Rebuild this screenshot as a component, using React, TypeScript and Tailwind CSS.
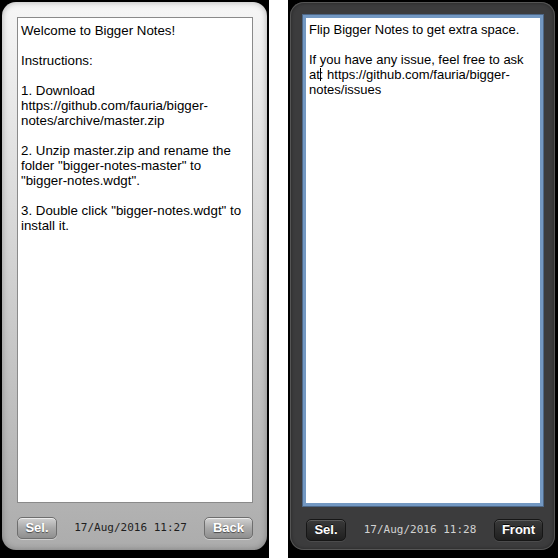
import React from 'react';

const sans = 'font-["Liberation_Sans",Arial,sans-serif]';
const mono = 'font-["DejaVu_Sans_Mono",monospace]';

function LightButton({ label, width }: { label: string; width: string }) {
    return (
        <div
            className={`${width} h-[22px] flex items-center justify-center rounded-[5px] border border-[#6e6e6e] bg-gradient-to-b from-[#d2d2d2] via-[#a9a9a9] to-[#8f8f8f] shadow-[inset_0_1px_0_rgba(255,255,255,0.6),0_1px_0_rgba(255,255,255,0.4)] text-[13px] font-bold text-white [text-shadow:0_1px_1px_rgba(0,0,0,0.55)] ${sans}`}
        >
            {label}
        </div>
    );
}

function DarkButton({ label, width }: { label: string; width: string }) {
    return (
        <div
            className={`${width} h-[22px] flex items-center justify-center rounded-[5px] border border-[#161616] bg-gradient-to-b from-[#3a3a3a] to-[#202020] shadow-[inset_0_1px_0_rgba(255,255,255,0.18),0_1px_0_rgba(255,255,255,0.08)] text-[13px] font-bold text-white [text-shadow:0_-1px_0_rgba(0,0,0,0.8)] ${sans}`}
        >
            {label}
        </div>
    );
}

export default function App() {
    return (
        <div className="flex h-[558px] w-[558px] justify-between bg-white">
            {/* Front side */}
            <div className="w-[269px] bg-black pl-[2px] pr-[2px] pt-[2px] pb-[8px]">
                <div className="flex h-full flex-col rounded-[14px] bg-gradient-to-b from-[#f6f6f6] to-[#acacac] pl-[15px] pr-[14px] pt-[15px] shadow-[inset_0_0_6px_rgba(0,0,0,0.3)]">
                    <div
                        className={`h-[486px] border border-[#8a8a8a] bg-white pl-[3px] pt-[5px] text-[13.3px] leading-[15px] text-black whitespace-pre ${sans}`}
                    >
                        {`Welcome to Bigger Notes!

Instructions:

1. Download
https://github.com/fauria/bigger-
notes/archive/master.zip

2. Unzip master.zip and rename the
folder "bigger-notes-master" to
"bigger-notes.wdgt".

3. Double click "bigger-notes.wdgt" to
install it.`}
                    </div>
                    <div className="mt-[14px] flex items-center justify-between">
                        <LightButton label="Sel." width="w-[40px]" />
                        <span className={`text-[11px] text-[#1e1e1e] ${mono}`}>17/Aug/2016 11:27</span>
                        <LightButton label="Back" width="w-[49px]" />
                    </div>
                </div>
            </div>

            {/* Back side */}
            <div className="w-[270px] bg-black pl-[2px] pr-[3px] pt-[2px] pb-[8px]">
                <div className="flex h-full flex-col rounded-[14px] bg-[#3c3c3d] pl-[13px] pr-[12px] pt-[13px] shadow-[inset_0_0_0_1px_#555,inset_0_0_4px_rgba(0,0,0,0.6)]">
                    <div
                        className={`h-[491px] border-[3px] border-[#7398c2] bg-white pl-[3px] pt-[4px] text-[13px] leading-[15px] text-black whitespace-pre shadow-[0_0_0_1px_#4d6787] ${sans}`}
                    >
                        {`Flip Bigger Notes to get extra space.

If you have any issue, feel free to ask
at`}
                        <span className="-mr-[1px] inline-block h-[13px] w-[1px] bg-black align-[-2px]" />
                        {`: https://github.com/fauria/bigger-
notes/issues`}
                    </div>
                    <div className="mt-[13px] flex items-center justify-between pl-[3px]">
                        <DarkButton label="Sel." width="w-[40px]" />
                        <span className={`text-[11px] text-[#d2d2d2] ${mono}`}>17/Aug/2016 11:28</span>
                        <DarkButton label="Front" width="w-[49px]" />
                    </div>
                </div>
            </div>
        </div>
    );
}
